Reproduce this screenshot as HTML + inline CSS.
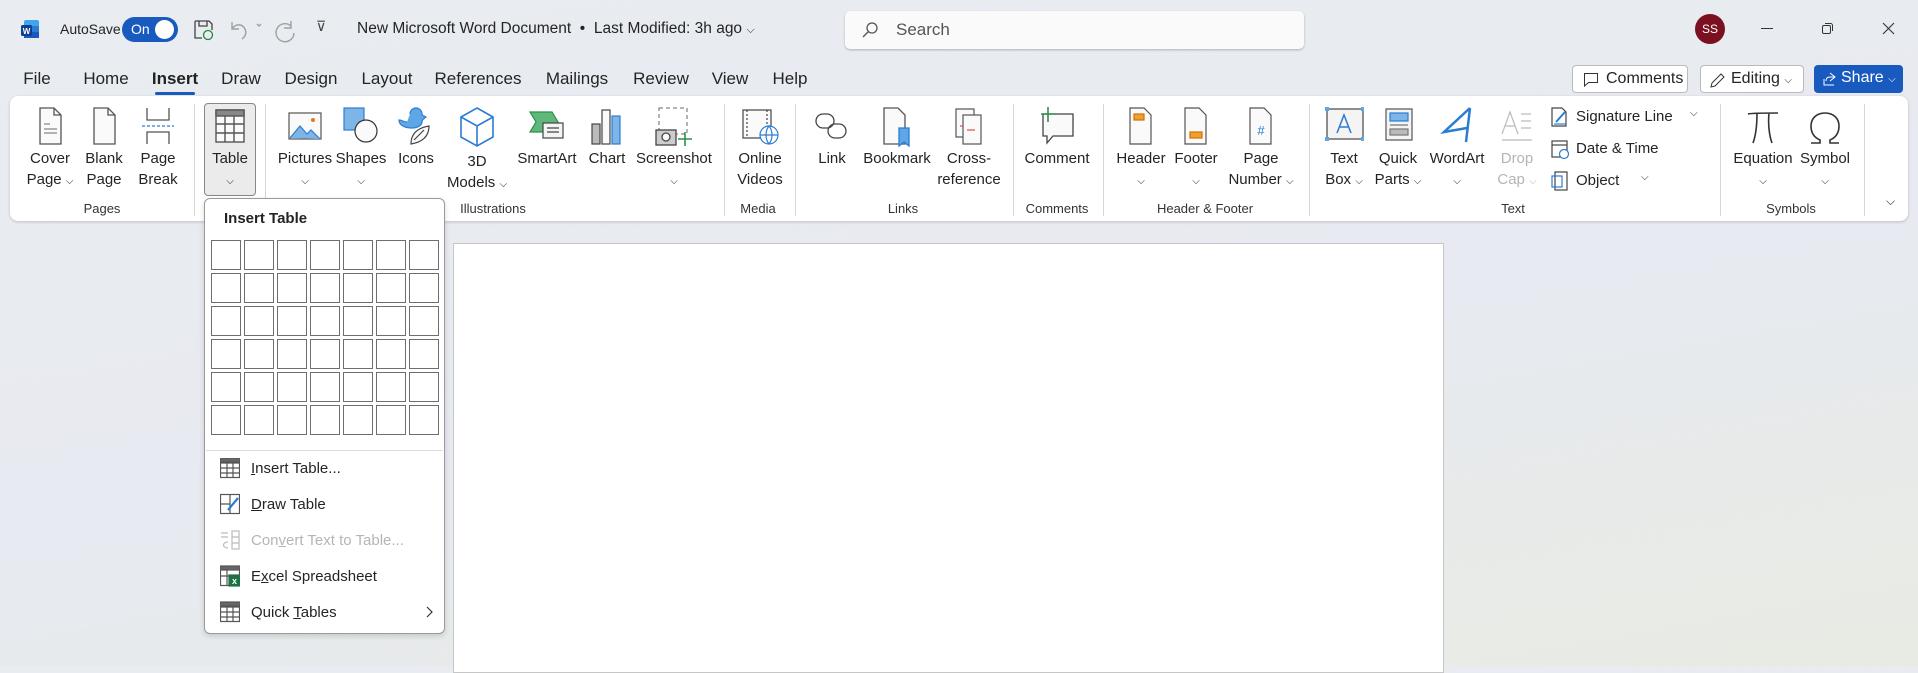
<!DOCTYPE html>
<html><head><meta charset="utf-8"><style>
*{margin:0;padding:0;box-sizing:border-box}
body{width:1918px;height:666px;overflow:hidden;position:relative;font-family:"Liberation Sans",sans-serif;color:#242424;background:linear-gradient(170deg,#e9ecf1 0%,#e7eaf0 55%,#e8ebe3 100%)}
.a{position:absolute}
.t{position:absolute;white-space:nowrap;font-size:15px;transform:translateX(-50%);text-align:center;line-height:21px}
.t small{font-size:10px}
.tab{position:absolute;top:69px;font-size:17px;transform:translateX(-50%)}
.gl{position:absolute;top:201px;font-size:13px;transform:translateX(-50%);color:#333}
.sep{position:absolute;top:104px;width:1px;height:112px;background:#d6d6d6}
.ic{position:absolute;top:106px;transform:translateX(-50%)}
.cell{position:absolute;width:30px;height:30px;border:1px solid #6e6e6e;background:#fff}
.mi{position:absolute;left:251px;font-size:15px;color:#242424}
.dis{color:#b5b5b5}
</style></head><body>
<svg class="a" style="left:20px;top:19px" width="20" height="20" viewBox="0 0 20 20"><rect x="4" y="1" width="15" height="18" rx="2" fill="#41a5ee"/><rect x="4" y="7" width="15" height="6" fill="#2b7cd3"/><rect x="4" y="13" width="15" height="6" fill="#185abd"/><rect x="1" y="6" width="11" height="11" rx="1.5" fill="#103f91"/><text x="6.5" y="15" font-size="8" font-weight="bold" fill="#fff" text-anchor="middle" font-family="Liberation Sans">W</text></svg>
<div class="a" style="left:60px;top:21px;font-size:14px">AutoSave</div>
<div class="a" style="left:122px;top:17px;width:56px;height:25px;border-radius:13px;background:#185abd"><span class="a" style="left:9px;top:4px;color:#fff;font-size:14px">On</span><span class="a" style="left:33px;top:3px;width:19px;height:19px;border-radius:50%;background:#fff"></span></div>
<svg class="a" style="left:193px;top:19px" width="22" height="22" viewBox="0 0 22 22" fill="none" stroke="#444" stroke-width="1.3"><path d="M2 2h14l3 3v6M2 2v17h7"/><path d="M6 2v5h8V2"/><circle cx="15" cy="16" r="4.5" stroke="#1e8b3a"/></svg>
<svg class="a" style="left:228px;top:18px" width="50" height="24" viewBox="0 0 50 24" fill="none" stroke="#a0a0a0" stroke-width="1.4"><path d="M4 4v7h7M4 11c3-5 10-6 13 0 2 4 0 8-3 10"/><path d="M29 6l2 2 2-2"/></svg>
<svg class="a" style="left:273px;top:17px" width="26" height="26" viewBox="0 0 26 26" fill="none" stroke="#a0a0a0" stroke-width="1.4"><path d="M18 4v7h-7"/><path d="M18 9A9 9 0 1 0 21 16"/></svg>
<div class="a" style="left:316px;top:18px;font-size:14px;color:#444">⊽</div>
<div class="a" style="left:357px;top:20px;font-size:15.5px">New Microsoft Word Document &nbsp;•&nbsp; Last Modified: 3h ago <span style="font-size:11px">⌵</span></div>
<div class="a" style="left:845px;top:11px;width:459px;height:38px;background:#fafafa;border-radius:5px;box-shadow:0 1px 2px rgba(0,0,0,.25)"><svg class="a" style="left:16px;top:10px" width="18" height="18" viewBox="0 0 18 18" fill="none" stroke="#555" stroke-width="1.3"><circle cx="11" cy="7" r="5"/><path d="M7.5 10.5L2 16"/></svg><span class="a" style="left:51px;top:9px;font-size:17px;color:#555">Search</span></div>
<div class="a" style="left:1695px;top:14px;width:30px;height:30px;border-radius:50%;background:#7b1020;color:#fff;font-size:12px;text-align:center;line-height:30px">SS</div>
<div class="a" style="left:1761px;top:28px;width:12px;height:1px;background:#333"></div>
<svg class="a" style="left:1821px;top:22px" width="13" height="13" viewBox="0 0 13 13" fill="none" stroke="#333"><rect x="1.5" y="3.5" width="8" height="8" rx="1.5"/><path d="M4 1.5h5.5a2 2 0 0 1 2 2V9"/></svg>
<svg class="a" style="left:1882px;top:22px" width="13" height="13" viewBox="0 0 13 13" stroke="#333" stroke-width="1.1"><path d="M1 1l11 11M12 1L1 12"/></svg>
<div class="tab" style="left:37px">File</div><div class="tab" style="left:106px">Home</div>
<div class="tab" style="left:175px;font-weight:bold;color:#222">Insert</div>
<div class="a" style="left:155px;top:92px;width:40px;height:3px;border-radius:2px;background:#185abd"></div>
<div class="tab" style="left:241px">Draw</div><div class="tab" style="left:311px">Design</div><div class="tab" style="left:387px">Layout</div><div class="tab" style="left:478px">References</div><div class="tab" style="left:577px">Mailings</div><div class="tab" style="left:661px">Review</div><div class="tab" style="left:730px">View</div><div class="tab" style="left:790px">Help</div>
<div class="a" style="left:1572px;top:65px;width:116px;height:28px;border:1px solid #bbb;border-radius:4px;background:#fff;font-size:16px;padding:4px 0 0 33px">Comments<svg class="a" style="left:10px;top:6px" width="16" height="16" viewBox="0 0 16 16" fill="none" stroke="#333"><path d="M1.5 1.5h13v9h-9l-4 3.5z"/></svg></div>
<div class="a" style="left:1700px;top:65px;width:104px;height:28px;border:1px solid #bbb;border-radius:4px;background:#fff;font-size:16px;padding:4px 0 0 30px">Editing <span style="font-size:10px">⌵</span><svg class="a" style="left:8px;top:5px" width="18" height="18" viewBox="0 0 18 18" fill="none" stroke="#333"><path d="M2 16l1-4 9-9 3 3-9 9z"/></svg></div>
<div class="a" style="left:1814px;top:65px;width:89px;height:28px;border-radius:4px;background:#185abd;color:#fff;font-size:16px;padding:4px 0 0 27px">Share <span style="font-size:10px">⌵</span><svg class="a" style="left:8px;top:6px" width="16" height="16" viewBox="0 0 16 16" fill="none" stroke="#fff"><path d="M2 8v6h10M8 2l5 4-5 4M13 6H8c-3 0-4 2-4 4"/></svg></div>
<div class="a" style="left:10px;top:96px;width:1898px;height:125px;background:#fff;border-radius:8px;box-shadow:0 1px 3px rgba(0,0,0,.18)"></div>
<div class="sep" style="left:194px"></div><div class="sep" style="left:265px"></div><div class="sep" style="left:724px"></div><div class="sep" style="left:795px"></div><div class="sep" style="left:1013px"></div><div class="sep" style="left:1103px"></div><div class="sep" style="left:1309px"></div><div class="sep" style="left:1720px"></div><div class="sep" style="left:1864px"></div>
<div class="a" style="left:204px;top:103px;width:52px;height:93px;background:#ebebeb;border:1px solid #888;border-radius:4px"></div>
<svg class="ic" style="left:50px" width="36" height="40" viewBox="0 0 36 40" fill="#fafafa" stroke="#555" stroke-width="1.3"><path d="M8 2h14l7 7v29H8z"/><path d="M22 2v7h7" fill="none"/><path d="M12 18h6M12 23h13M12 27h13" stroke="#888"/></svg>
<svg class="ic" style="left:104px" width="36" height="40" viewBox="0 0 36 40" fill="#fafafa" stroke="#555" stroke-width="1.3"><path d="M8 2h14l7 7v29H8z"/><path d="M22 2v7h7" fill="none"/></svg>
<svg class="ic" style="left:158px" width="36" height="40" viewBox="0 0 36 40" fill="none" stroke="#555" stroke-width="1.3"><path d="M7 2v12h22V2M7 38V26h22v12"/><path d="M2 20h32" stroke="#2b7cd3" stroke-dasharray="3 2"/></svg>
<svg class="ic" style="left:230px" width="36" height="40" viewBox="0 0 36 40" fill="#fafafa" stroke="#555" stroke-width="1.4"><rect x="4" y="4" width="28" height="32"/><rect x="4" y="4" width="28" height="6" fill="#888"/><path d="M4 18h28M4 27h28M13 10v26M22 10v26" fill="none"/></svg>
<svg class="ic" style="left:305px" width="38" height="40" viewBox="0 0 38 40" stroke="#555" stroke-width="1.2"><rect x="3" y="7" width="32" height="26" fill="#fafafa"/><path d="M4 32l10-12 7 8 4-4 9 9" fill="#7db6e6" stroke="#2b7cd3"/><circle cx="27" cy="14" r="2" fill="#e87722" stroke="none"/></svg>
<svg class="ic" style="left:361px" width="40" height="40" viewBox="0 0 40 40" stroke="#333" stroke-width="1.2"><rect x="3" y="2" width="20" height="22" fill="#7db6e6" stroke="#2b7cd3"/><circle cx="25" cy="25" r="11" fill="#fafafa"/></svg>
<svg class="ic" style="left:416px" width="40" height="40" viewBox="0 0 40 40" stroke-width="1.2"><path d="M14 8a6 6 0 0 1 12 0c0 2 3 2 4 3-2 2-4 2-4 5 0 3-4 6-10 6S3 20 3 14c3 0 5 2 8 2" fill="#5ea7e6" stroke="#2b7cd3"/><path d="M15 38c0-10 6-16 18-18 0 10-6 16-18 18zM18 34l10-10" fill="#fafafa" stroke="#444"/></svg>
<svg class="ic" style="left:477px" width="40" height="42" viewBox="0 0 40 42" fill="none" stroke="#2b7cd3" stroke-width="1.6"><path d="M20 2l16 9v20l-16 9-16-9V11zM4 11l16 9 16-9M20 20v20"/></svg>
<svg class="ic" style="left:547px" width="40" height="40" viewBox="0 0 40 40" stroke-width="1.2"><path d="M3 6h22l6 10-6 10H3l6-10z" fill="#5fb87a" stroke="#2f8f4e"/><rect x="16" y="17" width="20" height="15" fill="#f4f4f4" stroke="#444"/><path d="M20 22h12M20 26h12" stroke="#444"/></svg>
<svg class="ic" style="left:607px" width="36" height="40" viewBox="0 0 36 40" stroke="#444" stroke-width="1.2"><rect x="3" y="18" width="8" height="20" fill="#bbb"/><rect x="13" y="4" width="8" height="34" fill="#fafafa"/><rect x="23" y="10" width="8" height="28" fill="#7db6e6" stroke="#2b7cd3"/></svg>
<svg class="ic" style="left:674px" width="40" height="42" viewBox="0 0 40 42" fill="none" stroke-width="1.3"><rect x="5" y="2" width="28" height="26" stroke="#888" stroke-dasharray="4 3"/><rect x="2" y="24" width="20" height="15" fill="#ccc" stroke="#444"/><circle cx="12" cy="31" r="4" fill="#fafafa" stroke="#444"/><path d="M31 26v14M24 33h14" stroke="#2f8f4e" stroke-width="1.6"/></svg>
<svg class="ic" style="left:760px" width="40" height="40" viewBox="0 0 40 40" stroke-width="1.2"><rect x="3" y="4" width="28" height="28" fill="#fafafa" stroke="#444"/><path d="M7 4v28M27 4v28" stroke="#444" stroke-dasharray="2 2"/><circle cx="29" cy="29" r="9" fill="#fff" stroke="#2b7cd3"/><path d="M20 29h18M29 20c-4 5-4 13 0 18M29 20c4 5 4 13 0 18" fill="none" stroke="#2b7cd3"/></svg>
<svg class="ic" style="left:832px" width="40" height="40" viewBox="0 0 40 40" fill="none" stroke="#444" stroke-width="1.3"><rect x="4" y="8" width="18" height="14" rx="7"/><rect x="16" y="18" width="18" height="14" rx="7"/></svg>
<svg class="ic" style="left:897px" width="36" height="42" viewBox="0 0 36 42" stroke-width="1.3"><path d="M5 2h14l7 7v29H5z" fill="#fafafa" stroke="#555"/><path d="M20 22h10v18l-5-4-5 4z" fill="#5ea7e6" stroke="#2b7cd3"/></svg>
<svg class="ic" style="left:969px" width="36" height="40" viewBox="0 0 36 40" fill="#fafafa" stroke="#555" stroke-width="1.2"><rect x="5" y="3" width="18" height="28"/><rect x="12" y="9" width="18" height="29"/><path d="M9 20h3M16 24h8" stroke="#e05050"/></svg>
<svg class="ic" style="left:1057px" width="40" height="42" viewBox="0 0 40 42" stroke-width="1.3"><path d="M6 8h30v22H16l-6 7v-7H6z" fill="#fafafa" stroke="#444"/><path d="M11 1v15M4 8h15" stroke="#2f8f4e" stroke-width="1.6"/></svg>
<svg class="ic" style="left:1141px" width="36" height="40" viewBox="0 0 36 40" stroke="#555" stroke-width="1.2"><path d="M7 2h14l7 7v29H7z" fill="#fafafa"/><rect x="11" y="8" width="10" height="6" fill="#f0a030" stroke="#d07000"/></svg>
<svg class="ic" style="left:1196px" width="36" height="40" viewBox="0 0 36 40" stroke="#555" stroke-width="1.2"><path d="M7 2h14l7 7v29H7z" fill="#fafafa"/><rect x="12" y="26" width="12" height="6" fill="#f0a030" stroke="#d07000"/></svg>
<svg class="ic" style="left:1261px" width="36" height="40" viewBox="0 0 36 40" stroke="#555" stroke-width="1.2"><path d="M7 2h14l7 7v29H7z" fill="#fafafa"/><text x="18" y="29" font-size="13" fill="#2b7cd3" stroke="none" text-anchor="middle" font-family="Liberation Sans">#</text></svg>
<svg class="ic" style="left:1344px" width="40" height="40" viewBox="0 0 40 40" stroke-width="1.2"><rect x="3" y="3" width="36" height="30" fill="#f4f4f4" stroke="#444"/><path d="M13 27l7-18 7 18M16 21h8" fill="none" stroke="#2b7cd3" stroke-width="1.5"/><g fill="#5ea7e6"><rect x="1" y="1" width="4" height="4"/><rect x="37" y="1" width="4" height="4"/><rect x="1" y="31" width="4" height="4"/><rect x="37" y="31" width="4" height="4"/></g></svg>
<svg class="ic" style="left:1398px" width="36" height="40" viewBox="0 0 36 40" stroke-width="1.2"><rect x="6" y="3" width="26" height="31" fill="#f4f4f4" stroke="#555"/><rect x="10" y="7" width="18" height="8" fill="#7db6e6" stroke="#2b7cd3"/><path d="M10 19h18" stroke="#777"/><rect x="10" y="23" width="18" height="6" fill="#bbb" stroke="#777"/></svg>
<svg class="ic" style="left:1457px" width="36" height="40" viewBox="0 0 36 40" fill="none" stroke="#2b7cd3" stroke-width="2.5"><path d="M31 2L5 26l23-4M31 2l-4 34"/></svg>
<svg class="ic" style="left:1517px" width="36" height="40" viewBox="0 0 36 40" fill="none" stroke="#bbb" stroke-width="1.2"><path d="M3 28l8-22 8 22M6 20h10M22 8h10M22 15h10M22 22h10M3 34h30"/></svg>
<svg class="ic" style="left:1763px;top:110px" width="36" height="36" viewBox="0 0 36 36" fill="none" stroke="#333" stroke-width="1.6"><path d="M3 4c4-1 26-1 30-1M12 3c0 10-1 22-4 30M24 3c-1 10 0 22 3 30"/></svg>
<svg class="ic" style="left:1825px;top:110px" width="36" height="36" viewBox="0 0 36 36" fill="none" stroke="#333" stroke-width="1.6"><path d="M4 33h9v-3C6 27 4 21 4 16 4 8 10 3 18 3s14 5 14 13c0 5-2 11-9 14v3h9"/></svg>
<svg class="a" style="left:1550px;top:106px" width="20" height="22" viewBox="0 0 20 22" fill="none" stroke-width="1.2"><path d="M2 2h10l4 4v14H2z" stroke="#444"/><path d="M6 16l9-10" stroke="#2b7cd3" stroke-width="2"/><path d="M4 18h12" stroke="#2b7cd3"/></svg>
<div class="a" style="left:1576px;top:108px;font-size:15px">Signature Line</div><div class="a" style="left:1690px;top:108px;font-size:10px">⌵</div>
<svg class="a" style="left:1550px;top:138px" width="20" height="22" viewBox="0 0 20 22" fill="none" stroke="#444" stroke-width="1.2"><rect x="2" y="3" width="15" height="16"/><path d="M2 7h15"/><circle cx="14" cy="16" r="4.5" fill="#fff" stroke="#2b7cd3"/></svg>
<div class="a" style="left:1576px;top:140px;font-size:15px">Date &amp; Time</div>
<svg class="a" style="left:1550px;top:170px" width="20" height="22" viewBox="0 0 20 22" fill="none" stroke-width="1.2"><rect x="5" y="2" width="12" height="18" stroke="#444"/><rect x="2" y="6" width="10" height="11" stroke="#2b7cd3"/></svg>
<div class="a" style="left:1576px;top:172px;font-size:15px">Object</div><div class="a" style="left:1641px;top:172px;font-size:10px">⌵</div>
<div class="t" style="left:50px;top:148px">Cover<br>Page <small>⌵</small></div>
<div class="t" style="left:104px;top:148px">Blank<br>Page</div>
<div class="t" style="left:158px;top:148px">Page<br>Break</div>
<div class="t" style="left:230px;top:148px">Table<br><small>⌵</small></div>
<div class="t" style="left:305px;top:148px">Pictures<br><small>⌵</small></div>
<div class="t" style="left:361px;top:148px">Shapes<br><small>⌵</small></div>
<div class="t" style="left:416px;top:148px">Icons</div>
<div class="t" style="left:477px;top:151px">3D<br>Models <small>⌵</small></div>
<div class="t" style="left:547px;top:148px">SmartArt</div>
<div class="t" style="left:607px;top:148px">Chart</div>
<div class="t" style="left:674px;top:148px">Screenshot<br><small>⌵</small></div>
<div class="t" style="left:760px;top:148px">Online<br>Videos</div>
<div class="t" style="left:832px;top:148px">Link</div>
<div class="t" style="left:897px;top:148px">Bookmark</div>
<div class="t" style="left:969px;top:148px">Cross-<br>reference</div>
<div class="t" style="left:1057px;top:148px">Comment</div>
<div class="t" style="left:1141px;top:148px">Header<br><small>⌵</small></div>
<div class="t" style="left:1196px;top:148px">Footer<br><small>⌵</small></div>
<div class="t" style="left:1261px;top:148px">Page<br>Number <small>⌵</small></div>
<div class="t" style="left:1344px;top:148px">Text<br>Box <small>⌵</small></div>
<div class="t" style="left:1398px;top:148px">Quick<br>Parts <small>⌵</small></div>
<div class="t" style="left:1457px;top:148px">WordArt<br><small>⌵</small></div>
<div class="t" style="left:1517px;top:148px;color:#b5b5b5">Drop<br>Cap <small>⌵</small></div>
<div class="t" style="left:1763px;top:148px">Equation<br><small>⌵</small></div>
<div class="t" style="left:1825px;top:148px">Symbol<br><small>⌵</small></div>
<div class="a" style="left:1886px;top:194px;font-size:12px">⌵</div>
<div class="gl" style="left:102px">Pages</div><div class="gl" style="left:493px">Illustrations</div><div class="gl" style="left:758px">Media</div><div class="gl" style="left:903px">Links</div><div class="gl" style="left:1057px">Comments</div><div class="gl" style="left:1205px">Header &amp; Footer</div><div class="gl" style="left:1513px">Text</div><div class="gl" style="left:1791px">Symbols</div>
<div class="a" style="left:453px;top:243px;width:991px;height:430px;background:#fff;border:1px solid #c6c6c6"></div>
<div class="a" style="left:204px;top:198px;width:241px;height:436px;background:#fff;border:1px solid #9a9a9a;border-radius:6px;box-shadow:0 2px 6px rgba(0,0,0,.15)"></div>
<div class="a" style="left:224px;top:210px;font-size:15px;font-weight:bold">Insert Table</div>
<div class="a" style="left:206px;top:450px;width:237px;height:1px;background:#ddd"></div>
<svg class="a" style="left:220px;top:458px" width="20" height="180" viewBox="0 0 20 180" fill="none" stroke="#555" stroke-width="1.2">
<rect x="0.5" y="0.5" width="19" height="19"/><path d="M0 5h20M0 10h20M0 15h20M7 5v15M13 5v15"/><rect x="0" y="0" width="20" height="4" fill="#666"/>
<g transform="translate(0,36)"><rect x="0.5" y="0.5" width="19" height="19"/><path d="M0 10h10M10 0v20"/><path d="M8 16l10-12" stroke="#2b7cd3" stroke-width="2.2"/></g>
<g transform="translate(0,72)" stroke="#bbb"><path d="M1 3h7M1 7h7M8 12c-6 0-6 6 0 6"/><rect x="12" y="1" width="7" height="18"/><path d="M12 7h7M12 13h7"/></g>
<g transform="translate(0,108)"><rect x="0.5" y="0.5" width="19" height="19"/><rect x="0" y="0" width="20" height="4" fill="#666"/><path d="M0 10h20M7 4v16"/><rect x="9" y="9" width="11" height="11" fill="#1e7145" stroke="#1e7145"/><text x="14.5" y="18" font-size="9" fill="#fff" stroke="none" text-anchor="middle" font-family="Liberation Sans" font-weight="bold">x</text></g>
<g transform="translate(0,144)"><rect x="0.5" y="0.5" width="19" height="19"/><path d="M0 5h20M0 10h20M0 15h20M7 5v15M13 5v15"/><rect x="0" y="0" width="20" height="4" fill="#666"/></g>
</svg>
<div class="mi" style="top:460px"><u>I</u>nsert Table...</div>
<div class="mi" style="top:496px"><u>D</u>raw Table</div>
<div class="mi dis" style="top:532px">Con<u>v</u>ert Text to Table...</div>
<div class="mi" style="top:568px">E<u>x</u>cel Spreadsheet</div>
<div class="mi" style="top:604px">Quick <u>T</u>ables</div>
<svg class="a" style="left:424px;top:604px" width="10" height="16" viewBox="0 0 10 16" fill="none" stroke="#333" stroke-width="1.2"><path d="M3 3l5 5-5 5"/></svg>
<div>
<script>
var s='';for(var r=0;r<6;r++)for(var c=0;c<7;c++)s+='<div class="cell" style="left:'+(211+c*33)+'px;top:'+(240+r*33)+'px"></div>';document.write(s);
</script>
</div>
</body></html>
